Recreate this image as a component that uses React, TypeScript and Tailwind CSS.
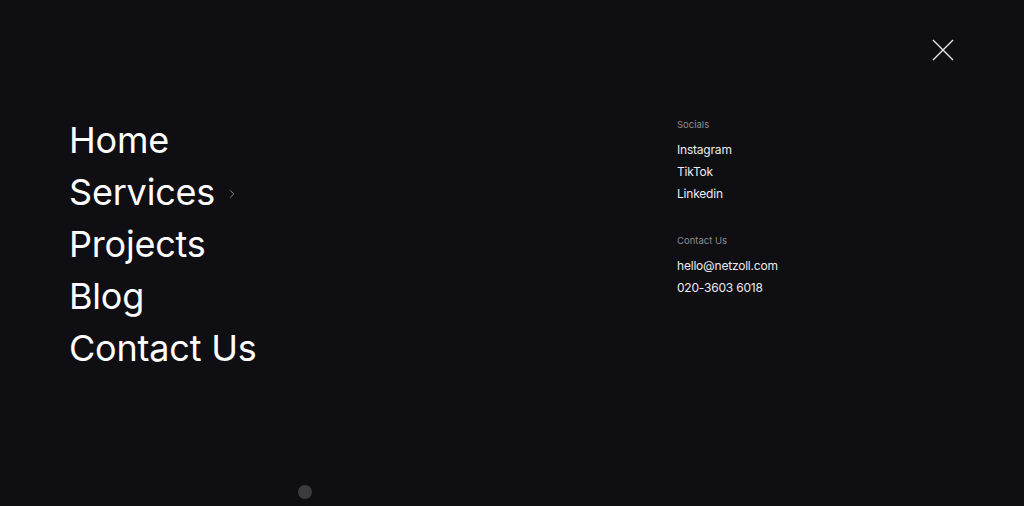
import { ChevronRight } from "lucide-react";

const navItems = ["Home", "Services", "Projects", "Blog", "Contact Us"];
const socials = ["Instagram", "TikTok", "Linkedin"];
const contact = ["hello@netzoll.com", "020-3603 6018"];

export default function App() {
  return (
    <div
      className="relative h-[506px] w-full overflow-hidden bg-[#0f0e13] text-white"
      style={{ fontFamily: "Inter, 'Noto Sans', sans-serif" }}
    >
      {/* Top bar with close */}
      <div className="flex h-[114px] justify-end pr-[70px] pt-[39px]">
        <button className="flex h-[22px] w-[22px] items-center justify-center text-[#e8e8ea]">
          <svg width="22" height="22" viewBox="0 0 22 22" fill="none" stroke="currentColor" strokeWidth="1.4">
            <path d="M1 1 L21 21 M21 1 L1 21" />
          </svg>
        </button>
      </div>

      <div className="flex pl-[69px]">
        {/* Main nav */}
        <nav className="w-[608px]">
          <ul className="flex flex-col">
            {navItems.map((item) => (
              <li key={item} className="flex items-center text-[36px] leading-[52px] tracking-[-0.2px]">
                <span>{item}</span>
                {item === "Services" && (
                  <ChevronRight size={14} strokeWidth={1.5} className="ml-[10px] mt-[4px] text-[#8d8d93]" />
                )}
              </li>
            ))}
          </ul>
        </nav>

        {/* Socials / contact */}
        <div className="flex flex-col pt-[3px]">
          <p className="text-[9.5px] leading-4 text-[#8c8c92]">Socials</p>
          <ul className="mt-[6px] flex flex-col">
            {socials.map((s) => (
              <li key={s} className="text-[12px] leading-[22px] tracking-[-0.2px] text-[#ececee]">
                {s}
              </li>
            ))}
          </ul>
          <p className="mt-[28px] text-[9.5px] leading-4 text-[#8c8c92]">Contact Us</p>
          <ul className="mt-[6px] flex flex-col">
            {contact.map((c) => (
              <li key={c} className="text-[12px] leading-[22px] tracking-[-0.2px] text-[#ececee]">
                {c}
              </li>
            ))}
          </ul>
        </div>
      </div>

      {/* cursor dot */}
      <div className="absolute left-[298px] top-[485px] h-[14px] w-[14px] rounded-full bg-[#3b3b40]" />
    </div>
  );
}
